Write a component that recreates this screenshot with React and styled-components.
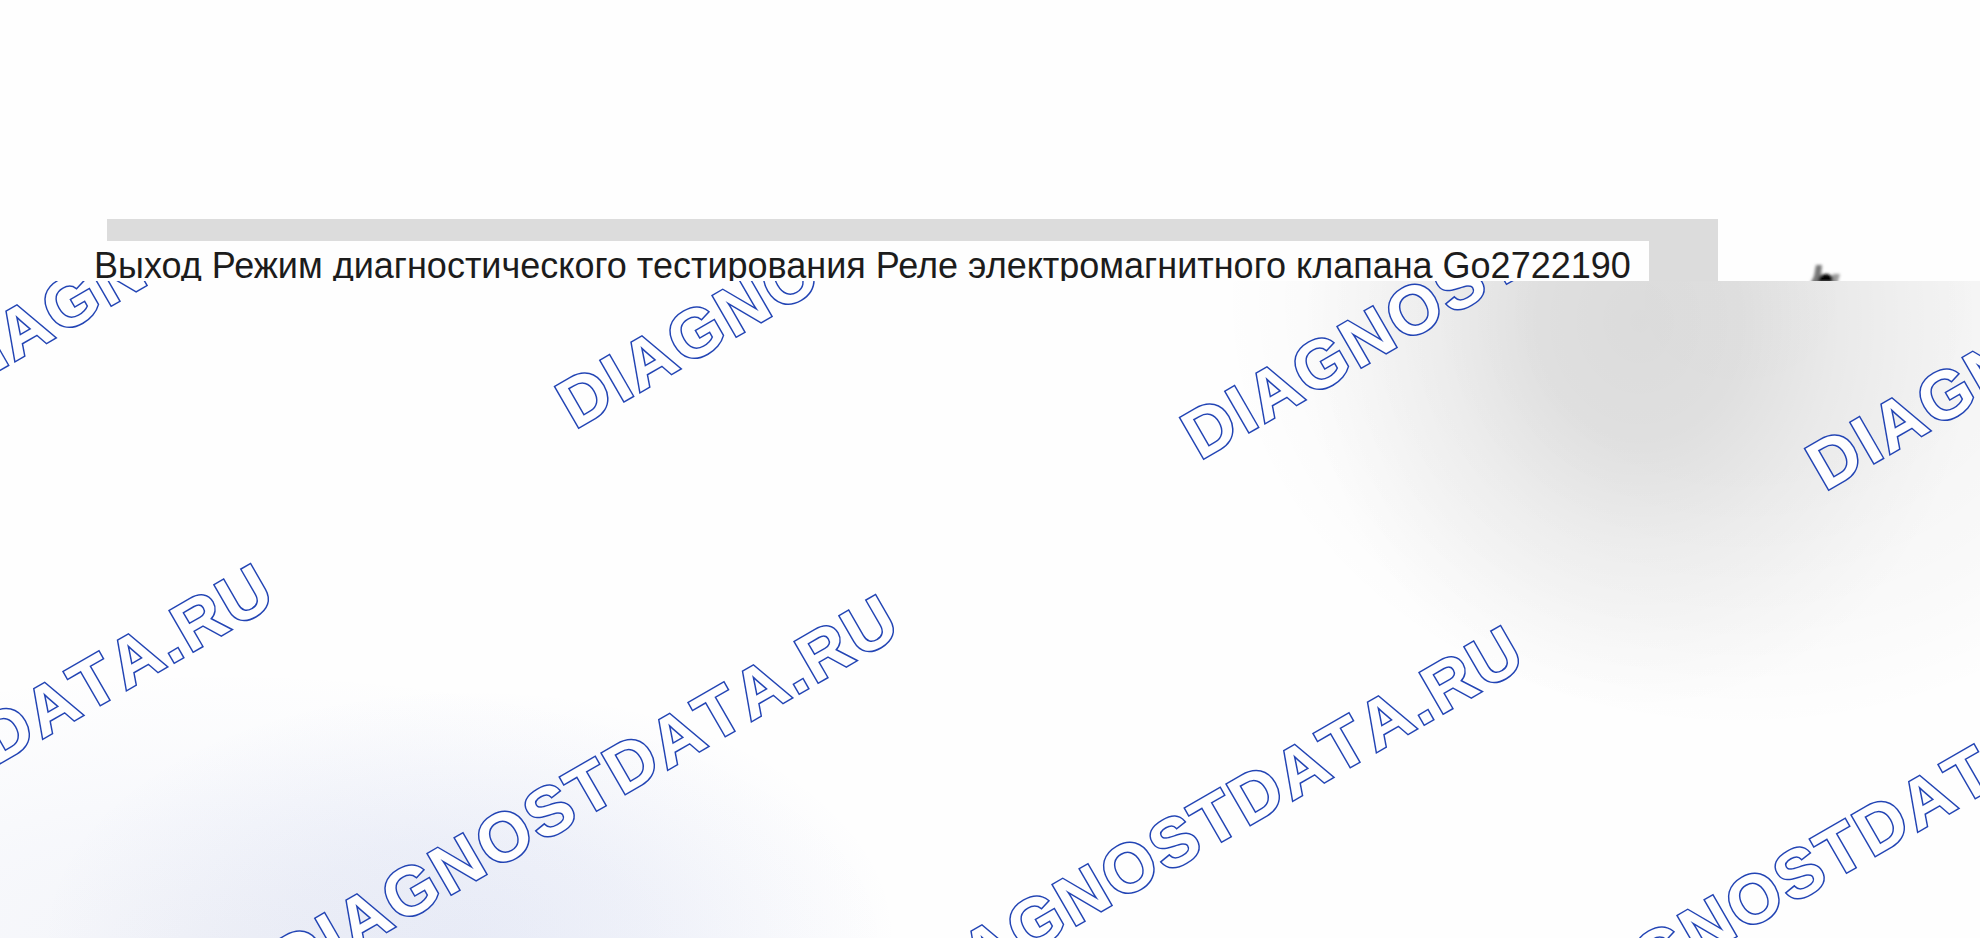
import React from "react";
import styled, { createGlobalStyle } from "styled-components";

const GlobalStyle = createGlobalStyle`
  body { margin: 0; background: #fefefe; font-family: "Liberation Sans", Arial, sans-serif; }
`;

const Page = styled.div`
  min-height: 100vh;
  display: flex;
  flex-direction: column;
  overflow: hidden;
`;

const Header = styled.header`
  height: 281px;
  box-sizing: border-box;
  padding-top: 219px;
  display: flex;
  align-items: flex-start;
  overflow: hidden;
`;

const Band = styled.div`
  flex: none;
  margin-left: 107px;
  width: 1611px;
  max-width: 82%;
  height: 62px;
  box-sizing: border-box;
  padding-top: 22px;
  background: #dcdcdc;
`;

const Title = styled.h1`
  margin: 0 0 0 -15px;
  width: max-content;
  padding: 0 18px 0 2px;
  height: 40px;
  line-height: 50px;
  background: #fefefe;
  color: #1c1c1c;
  font-size: 36px;
  font-weight: 400;
  white-space: nowrap;
`;

const Mark = styled.svg`
  flex: none;
  margin: 42px 0 0 90px;
`;

const Canvas = styled.main`
  position: relative;
  flex: 1;
  overflow: hidden;
  background:
    radial-gradient(ellipse 340px 390px at 1640px 40px, rgba(0, 0, 0, 0.1) 0%, rgba(0, 0, 0, 0.088) 30%, rgba(0, 0, 0, 0.045) 58%, rgba(0, 0, 0, 0.015) 82%, transparent 100%),
    radial-gradient(ellipse 520px 430px at 1740px 20px, rgba(0, 0, 0, 0.045) 0%, rgba(0, 0, 0, 0.04) 40%, rgba(0, 0, 0, 0.018) 75%, transparent 100%),
    radial-gradient(ellipse 430px 250px at 470px 100%, rgba(60, 90, 190, 0.08) 0%, rgba(60, 90, 190, 0.06) 40%, rgba(60, 90, 190, 0.02) 80%, transparent 100%),
    radial-gradient(ellipse 680px 270px at 220px 100%, rgba(50, 70, 150, 0.05) 0%, rgba(60, 90, 190, 0.035) 45%, rgba(60, 90, 190, 0.01) 80%, transparent 100%),
    #fefefe;
`;

const Watermark = styled.span`
  position: absolute;
  left: ${(p) => p.$x}px;
  top: ${(p) => p.$y}px;
  line-height: 80px;
  transform: rotate(-30deg);
  transform-origin: 0 0;
  font-size: 68px;
  font-weight: 700;
  font-kerning: none;
  letter-spacing: 3px;
  white-space: nowrap;
  color: #fefefe;
  -webkit-text-stroke: 3px #2244b4;
  paint-order: stroke fill;
  stroke-linejoin: round;
`;

const marks = [
  [-82, 62], [543, 93], [1168, 124], [1793, 155],
  [-367, 620], [258, 651], [883, 682], [1508, 713],
];

export default function App() {
  return (
    <Page>
      <GlobalStyle />
      <Header>
        <Band>
          <Title>Выход Режим диагностического тестирования Реле электромагнитного клапана Go2722190</Title>
        </Band>
        <Mark width="60" height="20" viewBox="0 0 60 20" aria-hidden="true">
          <defs>
            <filter id="soft" x="-30%" y="-30%" width="160%" height="160%">
              <feGaussianBlur stdDeviation="1.6" />
            </filter>
          </defs>
          <g filter="url(#soft)">
            <path d="M8 4h6l-1 10 5-1 7 2v8H2l4-8z" fill="#777" />
            <path d="M10 26a8 8 0 0 1 16 0z" fill="#000" transform="translate(0 -5)" />
            <path d="M25 13h7l-3 10h-5z" fill="#999" />
          </g>
        </Mark>
      </Header>
      <Canvas>
        {marks.map(([x, y]) => (
          <Watermark key={`${x},${y}`} $x={x} $y={y}>DIAGNOSTDATA.RU</Watermark>
        ))}
      </Canvas>
    </Page>
  );
}
